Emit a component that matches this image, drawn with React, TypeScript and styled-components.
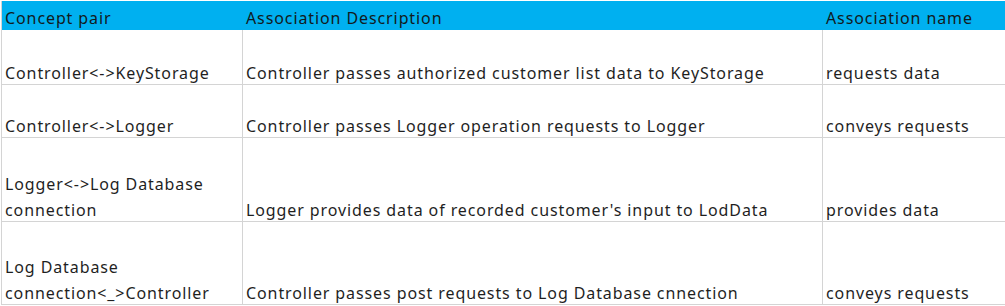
import React from "react";
import styled, { createGlobalStyle } from "styled-components";

const Global = createGlobalStyle`
  html, body { margin: 0; padding: 0; background: #ffffff; overflow: hidden; }
  body { font-family: "Noto Sans", "Noto Sans CJK KR", sans-serif; }
`;

const Sheet = styled.div`
  display: grid;
  grid-template-columns: 241px 580px 190px;
  grid-template-rows: 29px 55px 53px 84px 83px;
  margin: 1px 0 0 1px;
  border-left: 1px solid #d4d4d4;
  width: 1011px;
  font-size: 16px;
  letter-spacing: 0.9px;
  color: #1f1f1f;
`;

const HeadCell = styled.div`
  box-sizing: border-box;
  background: #00b0f0;
  display: flex;
  align-items: flex-end;
  padding: 0 3px 0;
  line-height: 26px;
  color: #121a20;
  white-space: nowrap;
`;

const Cell = styled.div`
  box-sizing: border-box;
  display: flex;
  align-items: flex-end;
  padding: 0 3px;
  border-right: 1px solid #d4d4d4;
  border-bottom: 1px solid #d4d4d4;
  white-space: pre-line;
`;

const Text = styled.span<{ $shift: number }>`
  display: block;
  line-height: 26px;
  margin-bottom: ${(p) => p.$shift}px;
`;

const rows = [
  { a: "Controller<->KeyStorage", b: "Controller passes authorized customer list data to KeyStorage", c: "requests data" },
  { a: "Controller<->Logger", b: "Controller passes Logger operation requests to Logger", c: "conveys requests" },
  { a: "Logger<->Log Database\nconnection", b: "Logger provides data of recorded customer's input to LodData", c: "provides data" },
  { a: "Log Database\nconnection<_>Controller", b: "Controller passes post requests to Log Database cnnection", c: "conveys requests" },
];

export default function App() {
  return (
    <>
      <Global />
      <Sheet>
        <HeadCell><Text $shift={-1}>Concept pair</Text></HeadCell>
        <HeadCell><Text $shift={-1}>Association Description</Text></HeadCell>
        <HeadCell><Text $shift={-1}>Association name</Text></HeadCell>
        {rows.map((r, i) => (
          <React.Fragment key={i}>
            <Cell><Text $shift={-2}>{r.a}</Text></Cell>
            <Cell><Text $shift={-2}>{r.b}</Text></Cell>
            <Cell><Text $shift={-2}>{r.c}</Text></Cell>
          </React.Fragment>
        ))}
      </Sheet>
    </>
  );
}
